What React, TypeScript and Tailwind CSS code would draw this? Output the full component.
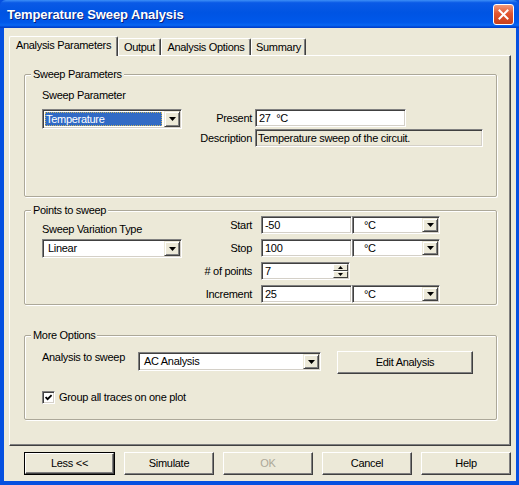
import React from 'react';

const DownTri = () => (
  <svg width="7" height="4" viewBox="0 0 7 4">
    <polygon points="0,0 7,0 3.5,4" fill="#000" />
  </svg>
);

const DropBtn = ({ w = 'w-[16px]' }: { w?: string }) => (
  <div
    className={`${w} self-stretch my-[1px] mr-[1px] shrink-0 bg-[#ece9d8] border border-t-[#ece9d8] border-l-[#ece9d8] border-r-[#404040] border-b-[#404040] shadow-[inset_1px_1px_0_#fff,inset_-1px_-1px_0_#808080] flex items-center justify-center`}
  >
    <DownTri />
  </div>
);

const Sunken = ({
  className = '',
  disabled = false,
  children,
}: {
  className?: string;
  disabled?: boolean;
  children?: React.ReactNode;
}) => (
  <div
    className={`border border-t-[#808080] border-l-[#808080] border-r-white border-b-white ${
      disabled ? 'bg-[#ece9d8]' : 'bg-white'
    } ${className}`}
  >
    <div className="h-full w-full flex items-center shadow-[inset_1px_1px_0_#404040,inset_-1px_-1px_0_#d4d0c8]">
      {children}
    </div>
  </div>
);

const Select = ({
  value,
  className,
  selected = false,
  textPad = 'pl-[3px]',
}: {
  value: string;
  className: string;
  selected?: boolean;
  textPad?: string;
}) => (
  <Sunken className={className}>
    <div className="flex-1 min-w-0 h-full p-[2px] flex items-center">
      {selected ? (
        <span className="h-full w-full flex items-center pl-[1px] bg-[#316ac5] text-white outline-1 outline-dotted outline-[#c9b45f] -outline-offset-1">
          {value}
        </span>
      ) : (
        <span className={textPad}>{value}</span>
      )}
    </div>
    <DropBtn />
  </Sunken>
);

const Group = ({
  title,
  className,
  children,
}: {
  title: string;
  className: string;
  children: React.ReactNode;
}) => (
  <div
    className={`relative border border-[#aca899] rounded-[2px] shadow-[inset_1px_1px_0_#fff,1px_1px_0_#fff] ${className}`}
  >
    <span className="absolute left-[6px] -top-[7px] px-[2px] bg-[#ece9d8] leading-[13px]">{title}</span>
    {children}
  </div>
);

const Button = ({
  label,
  className = 'w-[90px]',
  def = false,
  disabled = false,
}: {
  label: string;
  className?: string;
  def?: boolean;
  disabled?: boolean;
}) => (
  <div
    className={`h-[23px] ${className} ${
      def ? 'border border-black' : ''
    } bg-[#ece9d8]`}
  >
    <div className="h-full w-full border border-t-white border-l-white border-r-[#404040] border-b-[#404040] shadow-[inset_-1px_-1px_0_#808080] flex items-center justify-center">
      <span className={disabled ? 'text-[#aca899]' : 'text-black'}>{label}</span>
    </div>
  </div>
);

const Tab = ({ label, w, active = false }: { label: string; w: string; active?: boolean }) =>
  active ? (
    <div
      className={`${w} h-[20px] -mb-[1px] relative z-10 bg-[#ece9d8] border-t border-l border-r border-t-white border-l-white border-r-[#404040] rounded-t-[2px] shadow-[inset_-1px_0_0_#808080] flex items-start justify-center pt-[2px] leading-[13px]`}
    >
      {label}
    </div>
  ) : (
    <div
      className={`${w} h-[17px] bg-[#ece9d8] border-t border-l border-r border-t-white border-l-white border-r-[#404040] rounded-t-[2px] shadow-[inset_-1px_0_0_#808080] flex items-start justify-center pt-[2px] leading-[13px]`}
    >
      {label}
    </div>
  );

const Spinner = () => (
  <div className="w-[15px] self-stretch my-[1px] mr-[1px] flex flex-col shrink-0">
    <div className="flex-1 bg-[#ece9d8] border border-t-white border-l-white border-r-[#404040] border-b-[#404040] flex items-center justify-center">
      <svg width="5" height="3" viewBox="0 0 5 3">
        <polygon points="0,3 5,3 2.5,0" fill="#000" />
      </svg>
    </div>
    <div className="flex-1 bg-[#ece9d8] border border-t-white border-l-white border-r-[#404040] border-b-[#404040] flex items-center justify-center">
      <svg width="5" height="3" viewBox="0 0 5 3">
        <polygon points="0,0 5,0 2.5,3" fill="#000" />
      </svg>
    </div>
  </div>
);

const UnitRow = ({ label, value }: { label: string; value: string }) => (
  <>
    <span className="text-right">{label}</span>
    <div className="flex h-[18px]">
      <Sunken className="w-[91px] h-full">
        <span className="pl-[3px]">{value}</span>
      </Sunken>
      <Select value="°C" className="w-[88px] h-full" textPad="pl-[9px]" />
    </div>
  </>
);

export default function App() {
  return (
    <div className="w-[519px] h-[485px] flex flex-col bg-[#0550e0] pl-[4px] pr-[3px] pb-[4px] font-['Liberation_Sans',Arial,sans-serif] text-[11px] tracking-[-0.3px] text-black leading-[13px] select-none">
      {/* title bar */}
      <div className="-ml-[4px] -mr-[3px] h-[28px] shrink-0 flex items-center justify-between pl-[7px] pr-[5px] bg-[linear-gradient(to_bottom,#3d8ff7_0%,#0a5ae6_10%,#0054e3_45%,#0058ea_80%,#0866f2_90%,#0048d6_96%,#003cc4_100%)] rounded-t-[6px]">
        <span className="text-white font-bold text-[13px] tracking-[-0.1px] [text-shadow:1px_1px_0_#0a1f7a]">
          Temperature Sweep Analysis
        </span>
        <div className="w-[21px] h-[21px] rounded-[3px] border border-white bg-[linear-gradient(to_bottom,#f09a7c,#e2552f_45%,#c8401c)] flex items-center justify-center">
          <svg width="11" height="11" viewBox="0 0 11 11">
            <path d="M1.5 1.5 L9.5 9.5 M9.5 1.5 L1.5 9.5" stroke="#fff" strokeWidth="2" strokeLinecap="square" />
          </svg>
        </div>
      </div>

      {/* body */}
      <div className="flex-1 bg-[#ece9d8] px-[5px] pt-[8px] pb-[6px] flex flex-col">
        <div className="h-[19px] flex items-end">
          <Tab label="Analysis Parameters" w="w-[109px]" active />
          <Tab label="Output" w="w-[43px]" />
          <Tab label="Analysis Options" w="w-[90px]" />
          <Tab label="Summary" w="w-[55px]" />
        </div>

        <div className="h-[391px] border border-t-white border-l-white border-r-[#404040] border-b-[#404040] shadow-[inset_-1px_-1px_0_#808080] flex flex-col">
          {/* Sweep Parameters */}
          <Group title="Sweep Parameters" className="mt-[18px] ml-[14px] mr-[13px] h-[123px]">
            <div className="flex pl-[17px]">
              <div className="w-[140px] flex flex-col">
                <span className="mt-[14px]">Sweep Parameter</span>
                <Select value="Temperature" className="mt-[7px] h-[20px] w-[140px]" selected />
              </div>
              <div className="ml-[8px] mt-[34px] grid grid-cols-[62px_auto] gap-x-[3px] gap-y-[2px] items-center">
                <span className="text-right">Present</span>
                <Sunken className="w-[151px] h-[18px]">
                  <span className="pl-[3px] whitespace-pre">27  °C</span>
                </Sunken>
                <span className="text-right">Description</span>
                <Sunken className="w-[228px] h-[18px]" disabled>
                  <span className="pl-[2px]">Temperature sweep of the circuit.</span>
                </Sunken>
              </div>
            </div>
          </Group>

          {/* Points to sweep */}
          <Group title="Points to sweep" className="mt-[13px] ml-[14px] mr-[13px] h-[95px]">
            <div className="flex pl-[17px]">
              <div className="w-[140px] flex flex-col">
                <span className="mt-[12px]">Sweep Variation Type</span>
                <Select value="Linear" className="mt-[3px] h-[19px] w-[140px]" />
              </div>
              <div className="ml-[8px] mt-[5px] grid grid-cols-[62px_auto] gap-x-[9px] gap-y-[5px] items-center">
                <UnitRow label="Start" value="-50" />
                <UnitRow label="Stop" value="100" />
                <span className="text-right">
                  # of points
                </span>
                <div className="flex h-[18px]">
                  <Sunken className="w-[89px] h-full">
                    <span className="pl-[3px] flex-1">7</span>
                    <Spinner />
                  </Sunken>
                </div>
                <UnitRow label="Increment" value="25" />
              </div>
            </div>
          </Group>

          {/* More Options */}
          <Group title="More Options" className="mt-[30px] ml-[14px] mr-[13px] h-[85px]">
            <div className="flex items-start pl-[17px] mt-[15px]">
              <span className="w-[96px]">Analysis to sweep</span>
              <Select value="AC Analysis" className="mt-[1px] h-[19px] w-[183px]" />
              <Button label="Edit Analysis" className="ml-[16px] w-[136px]" />
            </div>
            <div className="flex items-center pl-[17px] mt-[17px]">
              <Sunken className="w-[13px] h-[13px]">
                <div className="w-full h-full flex items-center justify-center">
                  <svg width="7" height="7" viewBox="0 0 7 7">
                    <polyline points="0.6,3 2.6,5.2 6.6,1" fill="none" stroke="#000" strokeWidth="1.8" />
                  </svg>
                </div>
              </Sunken>
              <span className="ml-[4px]">Group all traces on one plot</span>
            </div>
          </Group>
        </div>

        {/* bottom buttons */}
        <div className="mt-[6px] flex justify-end gap-[9px]">
          <Button label="Less <<" className="w-[91px]" def />
          <Button label="Simulate" />
          <Button label="OK" disabled />
          <Button label="Cancel" />
          <Button label="Help" />
        </div>
      </div>
    </div>
  );
}
